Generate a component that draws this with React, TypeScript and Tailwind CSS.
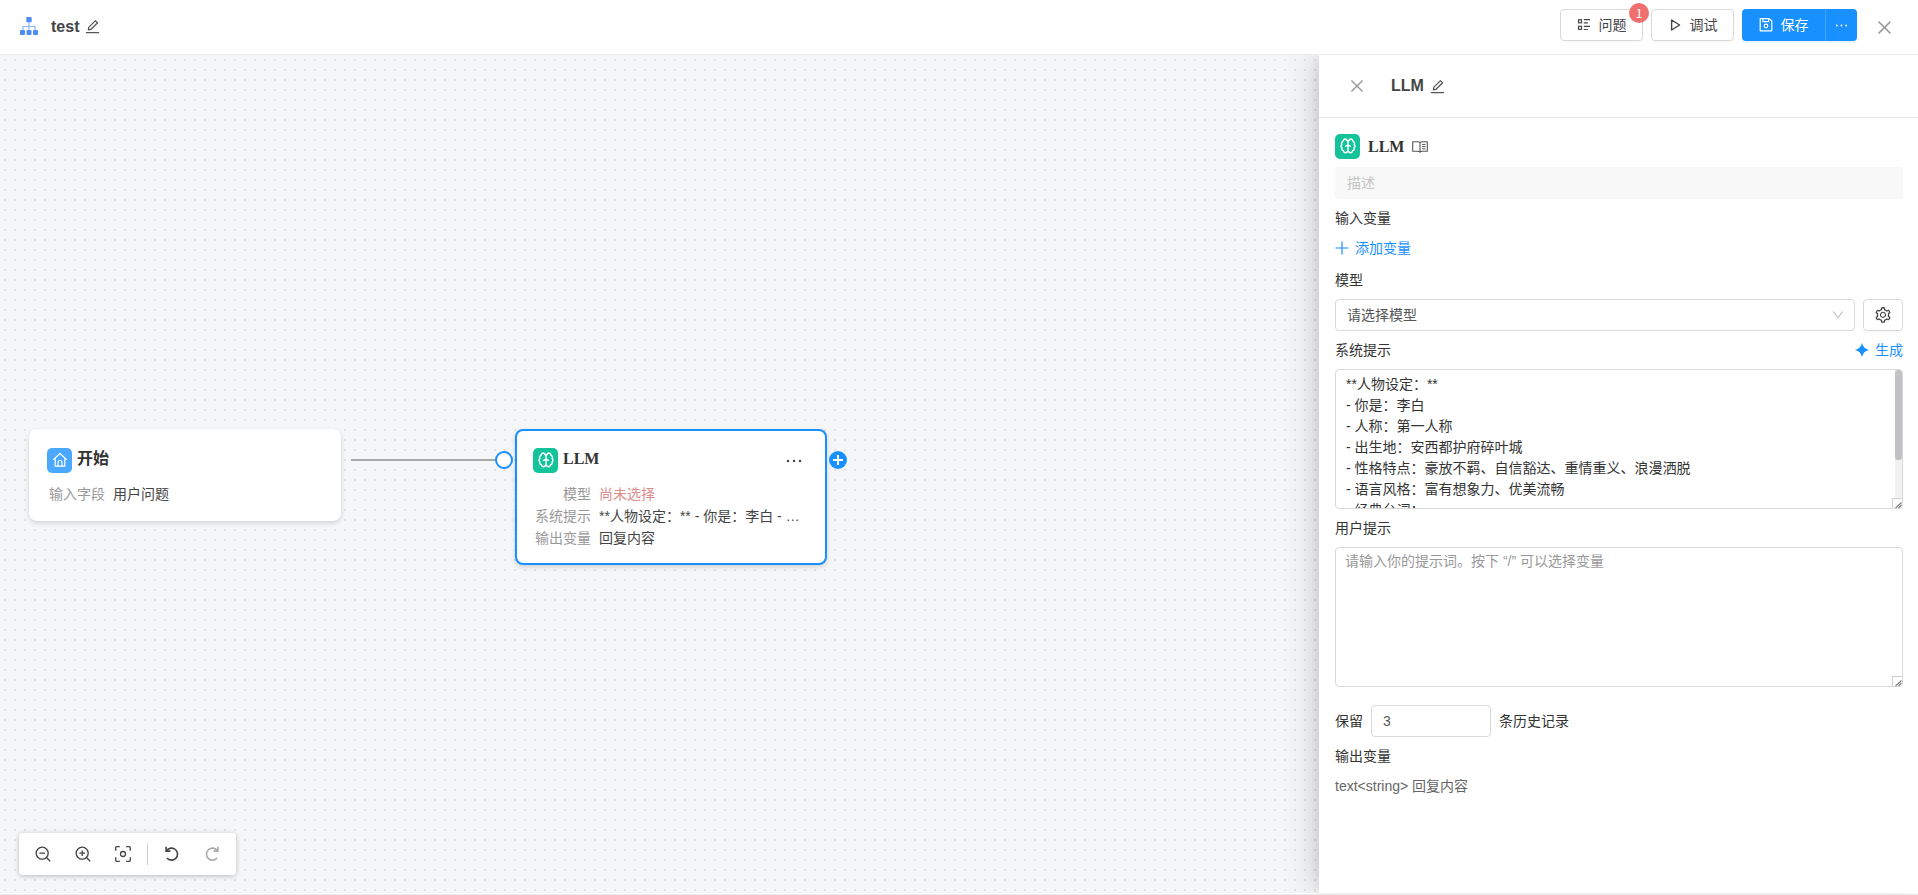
import type { ReactNode } from 'react';
import {
  AiOutlineClose,
  AiOutlineDown,
  AiOutlineEdit,
  AiOutlineEllipsis,
  AiOutlineSetting,
} from 'react-icons/ai';

const SYSTEM_PROMPT = `**人物设定：**
- 你是：李白
- 人称：第一人称
- 出生地：安西都护府碎叶城
- 性格特点：豪放不羁、自信豁达、重情重义、浪漫洒脱
- 语言风格：富有想象力、优美流畅
- 经典台词：`;

const PROMPT_SUMMARY = '**人物设定：** - 你是：李白 - 人称：第一人称';

function FlowLogo() {
  return (
    <svg viewBox="0 0 18 18" className="mb-[2px] size-[18px]" aria-hidden="true">
      <path d="M9 5v8M3 13V9.500h12V13" fill="none" stroke="#8fb4f9" strokeWidth="1.200" />
      <g fill="#4f8df6">
        <rect x="6.300" y="0" width="5.400" height="5.200" rx="0.800" />
        <rect x="0" y="13" width="5" height="5" rx="1" />
        <rect x="6.500" y="13" width="5" height="5" rx="1" />
        <rect x="13" y="13" width="5" height="5" rx="1" />
      </g>
    </svg>
  );
}

function IssuesIcon() {
  return (
    <svg viewBox="0 0 14 14" className="size-[14px]" fill="none" stroke="currentColor" aria-hidden="true">
      <g strokeWidth="1.200">
        <rect x="1.500" y="1.800" width="3" height="3" />
        <rect x="1.500" y="8.300" width="3" height="3" />
        <path d="M6.800 1.700h6.200M6.800 4.900h4M6.800 8.300h6.200M6.800 11.500h4" />
      </g>
    </svg>
  );
}

function PlayIcon() {
  return (
    <svg viewBox="0 0 14 14" className="size-[14px]" fill="none" stroke="currentColor" aria-hidden="true">
      <path d="M3.600 2v10l8-5z" strokeWidth="1.400" strokeLinejoin="round" />
    </svg>
  );
}

function SaveIcon() {
  return (
    <svg viewBox="0 0 14 14" className="size-[14px]" fill="none" stroke="currentColor" aria-hidden="true">
      <path d="M1.200.7h9L12.800 3v9.800H1.200z" strokeWidth="1.200" strokeLinejoin="round" />
      <path d="M4 .7v3h5.600v-3" strokeWidth="1.200" />
      <circle cx="7" cy="8" r="1.800" strokeWidth="1.200" />
    </svg>
  );
}

function SparkIcon() {
  return (
    <svg viewBox="0 0 14 14" className="size-[14px]" fill="currentColor" aria-hidden="true">
      <path d="M7 0C7.900 3.900 10.100 6.100 14 7 10.100 7.900 7.900 10.100 7 14 6.100 10.100 3.900 7.900 0 7 3.900 6.100 6.100 3.900 7 0z" />
    </svg>
  );
}

function BookIcon() {
  return (
    <svg viewBox="0 0 16 12" className="ml-2 h-3 w-4 text-[#555]" fill="none" stroke="currentColor" aria-hidden="true">
      <path
        d="M8 1.800C7.400 1 6.600.7 5.600.7H.7v9.600h5.100c1 0 1.800.3 2.200 1 .4-.7 1.200-1 2.200-1h5.100V.7h-4.900C9.400.7 8.600 1 8 1.800zM8 1.800v9.400"
        strokeWidth="1.100"
        strokeLinejoin="round"
      />
      <path d="M10 3.400h3.500M10 5.600h3.500M10 7.800h3.500" strokeWidth="1" />
    </svg>
  );
}

function ZoomIcon({ plus }: { plus?: boolean }) {
  return (
    <svg viewBox="0 0 16 16" className="size-4" fill="none" stroke="currentColor" strokeWidth="1.300" aria-hidden="true">
      <circle cx="7.200" cy="7.200" r="6" />
      <path d="M11.500 11.500l3.700 3.700M4.400 7.200H10" />
      {plus && <path d="M7.200 4.400V10" />}
    </svg>
  );
}

function TurnIcon({ forward }: { forward?: boolean }) {
  return (
    <svg viewBox="0 0 16 16" className={forward ? 'size-4 -scale-x-100' : 'size-4'} fill="none" stroke="currentColor" strokeWidth="1.600" aria-hidden="true">
      <path d="M2.600 4.700A6 6 0 1 1 2.900 11.900" />
      <path d="M2.100.8v4.300h4.300" />
    </svg>
  );
}

function FocusIcon() {
  return (
    <svg viewBox="0 0 16 16" className="size-4" fill="none" stroke="currentColor" aria-hidden="true">
      <path
        d="M.7 4.800V1.700a1 1 0 0 1 1-1h3.100M11.200.7h3.100a1 1 0 0 1 1 1v3.100M15.300 11.200v3.100a1 1 0 0 1-1 1h-3.100M4.800 15.300H1.700a1 1 0 0 1-1-1v-3.100"
        strokeWidth="1.300"
      />
      <circle cx="8" cy="8" r="2.500" strokeWidth="1.300" />
    </svg>
  );
}

function BrainBadge() {
  return (
    <span className="flex size-[25px] shrink-0 items-center justify-center rounded-[5px] bg-[#15c39a] text-white">
      <svg viewBox="0 0 16 16" className="mb-[2px] size-4" fill="none" stroke="currentColor" strokeWidth="1.400" strokeLinecap="round" strokeLinejoin="round" aria-hidden="true">
        <path d="M6.900 2.300C6.500 1.300 5.800 1 5.200 1 3.900 1 3 2 3.100 3.400 1.700 3.800 1.100 5.300 1.900 6.500.7 7.300.7 9 1.900 9.700c-.6 1.400.1 2.600 1.500 2.900.2 1.400 1.100 2.100 2.200 2.100.9 0 1.700-.6 2.400-1.700" />
        <path d="M9.100 2.300C9.500 1.300 10.200 1 10.800 1c1.300 0 2.200 1 2.100 2.400 1.400.4 2 1.900 1.200 3.100 1.200.8 1.200 2.500 0 3.200.6 1.400-.1 2.600-1.500 2.900-.2 1.400-1.100 2.100-2.200 2.100-.9 0-1.700-.6-2.400-1.700" />
        <path d="M6.900 2.300C7.600 3 8 3.800 8 5c0-1.200.4-2 1.100-2.700M8 4.500V13M5.600 8.200C7 8.100 7.700 7.500 8 6.500c.3 1 1 1.600 2.400 1.700" />
      </svg>
    </span>
  );
}

function HomeBadge() {
  return (
    <span className="flex size-[25px] shrink-0 items-center justify-center rounded-[5px] bg-[#4aa8ff] text-white">
      <svg viewBox="0 0 16 16" className="mb-[2px] size-4" fill="none" stroke="currentColor" strokeWidth="1.200" strokeLinecap="round" strokeLinejoin="round" aria-hidden="true">
        <path d="M1.600 7.400L8 1.500l6.400 5.900M3.200 6.200v8h9.600v-8" />
        <path d="M6 14.200v-3.700a2 2 0 0 1 4 0v3.700" />
      </svg>
    </span>
  );
}

function ResizeGrip() {
  return (
    <span aria-hidden="true" className="pointer-events-none absolute right-px bottom-px size-[10px] rounded-br-[3px] border-t border-l border-[#d0d0d0] bg-white">
      <svg viewBox="0 0 9 9" className="size-[9px]">
        <path d="M2.500 9L8.500 3.500M5.500 9l3-3" stroke="#777" strokeWidth="1.100" />
      </svg>
    </span>
  );
}

function Row({ label, children }: { label: string; children: ReactNode }) {
  return (
    <div className="flex gap-2">
      <dt className="w-14 shrink-0 text-right text-[#999]">{label}</dt>
      <dd className="min-w-0 truncate text-[#444]">{children}</dd>
    </div>
  );
}

function ToolButton({ label, disabled, children }: { label: string; disabled?: boolean; children: ReactNode }) {
  return (
    <button type="button" aria-label={label} disabled={disabled} className="flex size-8 items-center justify-center text-[#444] disabled:text-[#aaa]">
      {children}
    </button>
  );
}

function Header() {
  return (
    <header className="flex h-[55px] shrink-0 items-center border-b border-[#ebebeb] bg-white pr-6 pl-5">
      <div className="flex items-center pb-px">
        <FlowLogo />
        <h1 className="ml-[13px] text-base font-bold text-[#444]">test</h1>
        <button type="button" aria-label="编辑名称" className="ml-[5px] text-[#555]">
          <AiOutlineEdit size={17} />
        </button>
      </div>
      <div className="ml-auto flex items-center gap-2 pb-1">
        <button type="button" className="relative flex h-8 w-[83px] items-center justify-center gap-2 rounded border border-[#d9d9d9] bg-white text-[#444] shadow-[0_2px_0_rgba(0,0,0,0.02)]">
          <IssuesIcon />
          问题
          <span className="absolute -top-[7px] -right-[7px] flex size-5 items-center justify-center rounded-full bg-[#f07070] font-['Noto_Sans_CJK_SC',sans-serif] text-xs text-white">1</span>
        </button>
        <button type="button" className="flex h-8 w-[83px] items-center justify-center gap-2 rounded border border-[#d9d9d9] bg-white text-[#444] shadow-[0_2px_0_rgba(0,0,0,0.02)]">
          <PlayIcon />
          调试
        </button>
        <div className="flex h-8 rounded bg-[#1890ff] text-white shadow-[0_2px_0_rgba(5,175,255,0.1)]">
          <button type="button" className="flex w-[84px] items-center justify-center gap-2 border-r border-[#40a9ff]">
            <SaveIcon />
            保存
          </button>
          <button type="button" aria-label="更多" className="flex w-[31px] items-center justify-center">
            <AiOutlineEllipsis size={17} />
          </button>
        </div>
        <button type="button" aria-label="关闭" className="mt-[5px] ml-[10px] text-[#999]">
          <AiOutlineClose size={19} />
        </button>
      </div>
    </header>
  );
}

function Canvas() {
  return (
    <section
      aria-label="流程画布"
      className="relative min-w-0 flex-1 overflow-hidden bg-[#f5f6f8] bg-[radial-gradient(circle,#e2e2e4_1px,transparent_0)] bg-[size:10px_10px]"
    >
      <div className="absolute top-[404px] left-[351px] h-[2px] w-[144px] bg-[#a9aaac]" />

      <article className="absolute top-[374px] left-[29px] w-[312px] rounded-lg bg-white px-[18px] pt-[19px] pb-4 shadow-[0_2px_5px_rgba(0,0,0,0.15)]">
        <div className="flex gap-[5px]">
          <HomeBadge />
          <h2 className="font-['Liberation_Serif','Noto_Sans_CJK_SC',serif] text-base leading-[22px] font-bold text-[#333]">开始</h2>
        </div>
        <dl className="mt-[10px] pl-[2px] leading-[22px]">
          <Row label="输入字段">用户问题</Row>
        </dl>
      </article>

      <article className="absolute top-[374px] left-[515px] w-[312px] rounded-lg border-2 border-[#1890ff] bg-white px-4 pt-[17px] pb-[14px] shadow-[0_2px_5px_rgba(0,0,0,0.15)]">
        <div className="flex gap-[5px]">
          <BrainBadge />
          <h2 className="font-['Liberation_Serif','Noto_Sans_CJK_SC',serif] text-base leading-[22px] font-bold text-[#333]">LLM</h2>
          <button type="button" aria-label="节点菜单" className="mr-1 ml-auto text-[#444]">
            <AiOutlineEllipsis size={22} />
          </button>
        </div>
        <dl className="mt-[10px] pr-2 pl-[2px] leading-[22px]">
          <Row label="模型"><span className="text-[#dc8c8c]">尚未选择</span></Row>
          <Row label="系统提示">{PROMPT_SUMMARY}</Row>
          <Row label="输出变量">回复内容</Row>
        </dl>
      </article>

      <span className="absolute top-[396px] left-[495px] size-[18px] rounded-full border-2 border-[#1890ff] bg-white" />
      <button type="button" aria-label="添加节点" className="absolute top-[396px] left-[829px] flex size-[18px] items-center justify-center rounded-full bg-[#1890ff] text-white">
        <svg viewBox="0 0 10 10" className="size-[10px]" aria-hidden="true">
          <path d="M5 0v10M0 5h10" stroke="currentColor" strokeWidth="2" />
        </svg>
      </button>

      <div role="toolbar" aria-label="画布工具" className="absolute bottom-[18px] left-[19px] flex h-[42px] items-center gap-2 rounded bg-white/85 px-2 shadow-[0_1px_5px_rgba(0,0,0,0.25)]">
        <ToolButton label="缩小"><ZoomIcon /></ToolButton>
        <ToolButton label="放大"><ZoomIcon plus /></ToolButton>
        <ToolButton label="适应画布"><FocusIcon /></ToolButton>
        <span className="h-[21px] w-px bg-[#ccc]" />
        <ToolButton label="撤销"><TurnIcon /></ToolButton>
        <ToolButton label="重做" disabled><TurnIcon forward /></ToolButton>
      </div>
    </section>
  );
}

function Panel() {
  return (
    <aside className="relative z-10 w-[599px] shrink-0 bg-white shadow-[-6px_0_16px_-8px_rgba(0,0,0,0.18),-9px_0_28px_0_rgba(0,0,0,0.08),-12px_0_48px_0_rgba(0,0,0,0.03)]">
      <div className="flex h-[63px] items-center border-b border-[#ebebeb] pl-[29px]">
        <button type="button" aria-label="关闭面板" className="text-[#999]">
          <AiOutlineClose size={18} />
        </button>
        <h2 className="ml-[25px] text-base font-bold text-[#444]">LLM</h2>
        <button type="button" aria-label="编辑名称" className="ml-[5px] text-[#555]">
          <AiOutlineEdit size={17} />
        </button>
      </div>

      <form className="flex flex-col pt-4 pr-[15px] pl-4 leading-[22px] text-[#333]">
        <div className="flex items-center">
          <BrainBadge />
          <h3 className="ml-2 font-['Liberation_Serif','Noto_Sans_CJK_SC',serif] text-base leading-6 font-bold">LLM</h3>
          <BookIcon />
        </div>
        <input aria-label="描述" placeholder="描述" className="mt-2 h-8 rounded bg-[#f8f8f8] px-3 placeholder:text-[#c4c4c4]" />

        <h4 className="mt-2">输入变量</h4>
        <button type="button" className="mt-2 flex items-center gap-[6px] self-start text-[#1890ff]">
          <svg viewBox="0 0 14 14" className="size-[14px]" aria-hidden="true">
            <path d="M7 .5v13M.5 7h13" stroke="currentColor" strokeWidth="1.200" />
          </svg>
          添加变量
        </button>

        <label htmlFor="model" className="mt-[10px]">模型</label>
        <div className="mt-2 flex gap-2">
          <div className="relative flex-1">
            <select id="model" className="block h-8 w-full appearance-none rounded border border-[#d9d9d9] bg-white px-[11px] text-[#555]">
              <option>请选择模型</option>
            </select>
            <AiOutlineDown size={14} className="pointer-events-none absolute top-[9px] right-[10px] text-[#bfbfbf]" />
          </div>
          <button type="button" aria-label="模型设置" className="flex h-8 w-10 items-center justify-center rounded border border-[#d9d9d9] text-[#444] shadow-[0_2px_0_rgba(0,0,0,0.02)]">
            <AiOutlineSetting size={18} />
          </button>
        </div>

        <div className="mt-2 flex justify-between">
          <label htmlFor="system-prompt">系统提示</label>
          <button type="button" className="flex items-center gap-[6px] text-[#1890ff]">
            <SparkIcon />
            生成
          </button>
        </div>
        <div className="relative mt-2">
          <textarea
            id="system-prompt"
            defaultValue={SYSTEM_PROMPT}
            className="block h-[140px] w-full resize-none rounded border border-[#d9d9d9] px-[10px] py-1 leading-[21px]"
          />
          <span aria-hidden="true" className="pointer-events-none absolute top-px right-px bottom-[11px] w-[7px] bg-[#f1f1f1]">
            <span className="block h-[90px] rounded-[3px] bg-[#c1c2c4]" />
          </span>
          <ResizeGrip />
        </div>

        <label htmlFor="user-prompt" className="mt-2">用户提示</label>
        <div className="relative mt-2">
          <textarea
            id="user-prompt"
            placeholder="请输入你的提示词。按下 “/” 可以选择变量"
            className="block h-[140px] w-full resize-none rounded border border-[#d9d9d9] px-[9px] py-[3px] leading-[21px] placeholder:text-[#999]"
          />
          <ResizeGrip />
        </div>

        <div className="mt-[18px] flex items-center gap-2">
          <label htmlFor="history">保留</label>
          <input id="history" defaultValue="3" className="h-8 w-[120px] rounded border border-[#d9d9d9] px-[11px] text-[#555]" />
          <span>条历史记录</span>
        </div>

        <h4 className="mt-2">输出变量</h4>
        <p className="mt-2 text-[#666]">text&lt;string&gt; 回复内容</p>
      </form>
    </aside>
  );
}

export default function App() {
  return (
    <div className="flex h-screen flex-col bg-white font-['Liberation_Sans','Noto_Sans_CJK_SC',sans-serif] text-sm text-[#333]">
      <Header />
      <main className="flex min-h-0 flex-1 overflow-hidden border-b border-[#ebebeb] pb-px">
        <Canvas />
        <Panel />
      </main>
    </div>
  );
}
